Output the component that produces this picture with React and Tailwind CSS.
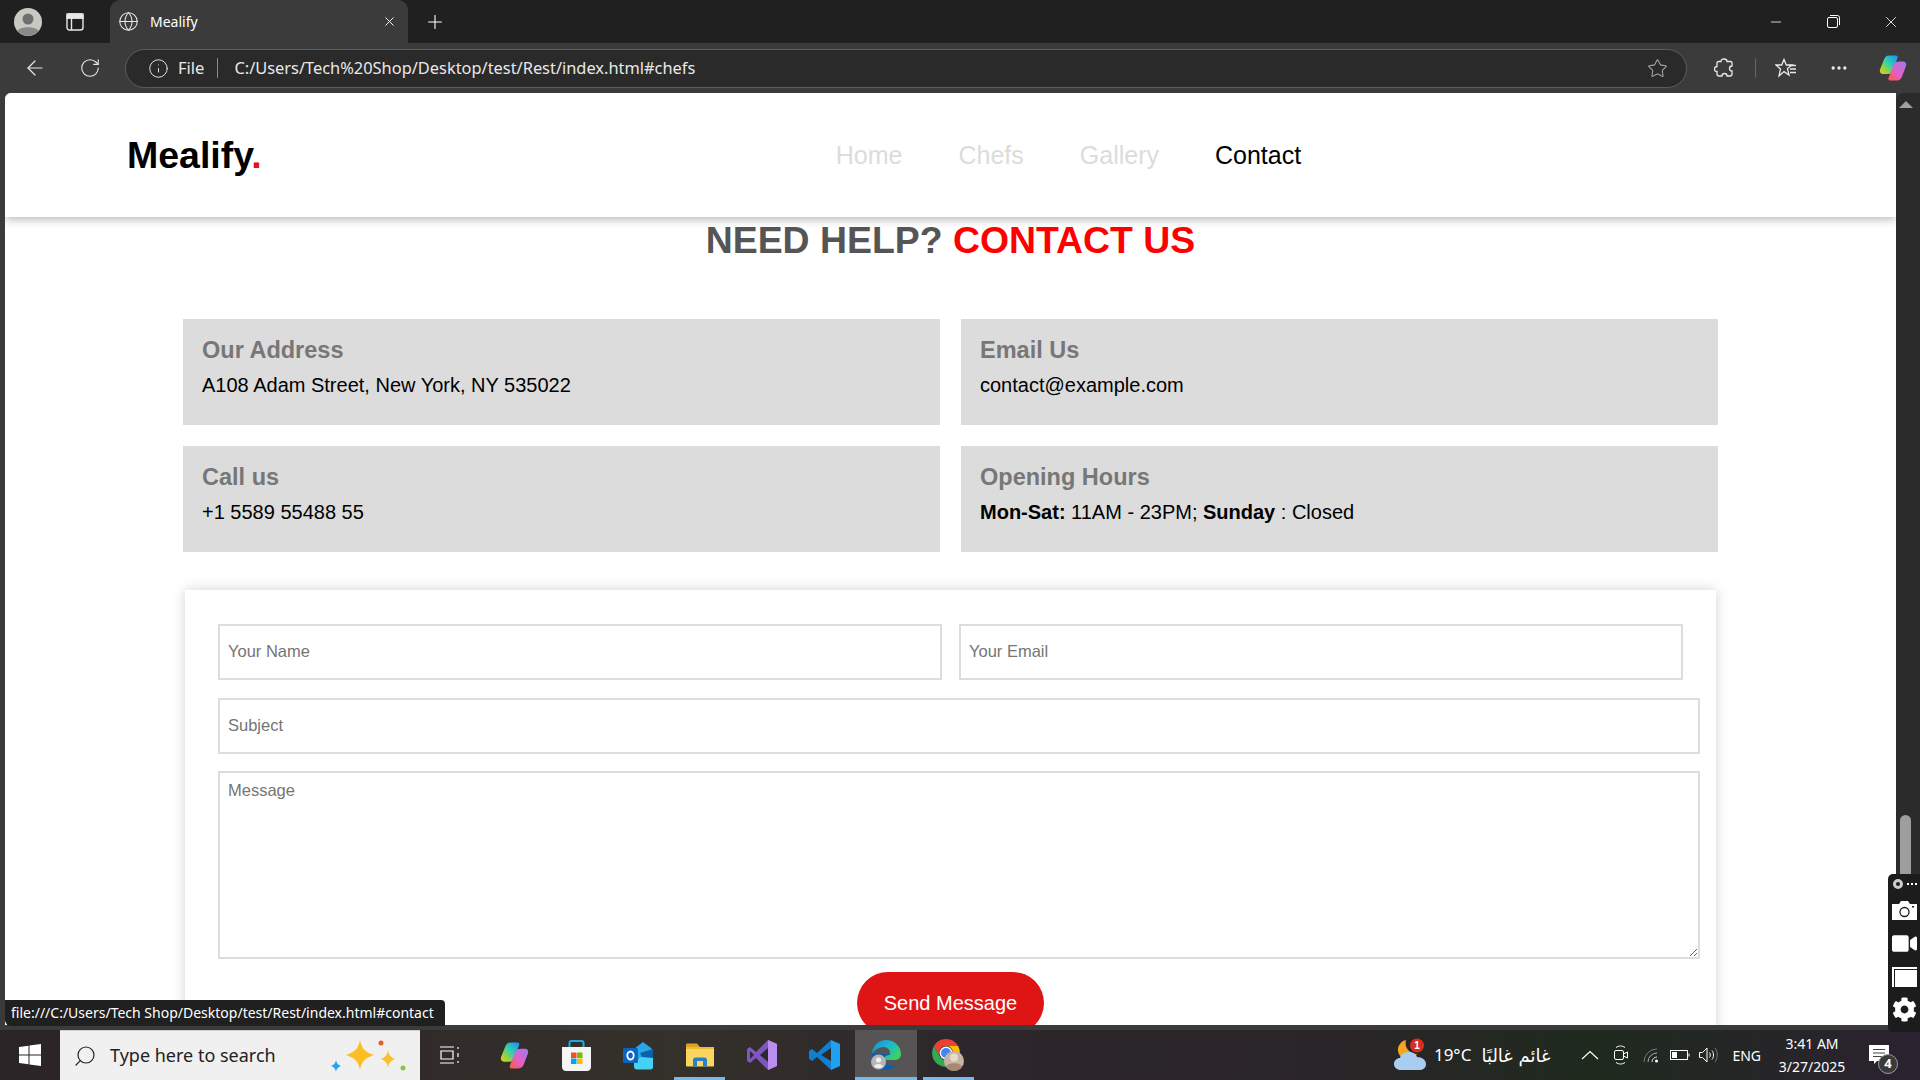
import React from 'react';
import { ArrowLeft, RotateCw, Info, Star, MoreHorizontal, Globe, X, Plus, Minus, Search } from 'lucide-react';
import { FaCog, FaVideo } from 'react-icons/fa';

const CopilotLogo = ({ id, size = 28 }) => (
  <svg width={size} height={size} viewBox="0 0 28 28">
    <defs>
      <linearGradient id={`${id}A`} x1="1" y1="0" x2="0" y2="1">
        <stop offset="0" stopColor="#1a8cff" />
        <stop offset="0.45" stopColor="#2fd0b0" />
        <stop offset="0.75" stopColor="#9ad23c" />
        <stop offset="1" stopColor="#f7c81e" />
      </linearGradient>
      <linearGradient id={`${id}B`} x1="1" y1="0" x2="0" y2="1">
        <stop offset="0" stopColor="#9b7bf0" />
        <stop offset="0.55" stopColor="#e45fc8" />
        <stop offset="1" stopColor="#ff5a36" />
      </linearGradient>
    </defs>
    <path d="M10 1.500h7c1.500 0 2 1 1.500 2.500L13.500 17c-.8 2-2 3-4 3H4.500C1.500 20 .3 18 1 15.500L5 5.500C6 3 7.500 1.500 10 1.500z" fill={`url(#${id}A)`} />
    <path d="M20 7.500h3.500c3 0 4.300 2 3.500 4.500l-4 10.500c-1 2.500-2.500 4-5 4h-7c-1.500 0-2-1-1.500-2.500L14.500 11c.8-2.300 2.500-3.500 5.500-3.500z" fill={`url(#${id}B)`} />
  </svg>
);

const WindowsLogo = () => (
  <svg width="22" height="22" viewBox="0 0 22 22" fill="#fff">
    <path d="M0 3.100 9.500 1.700V10.500H0zM10.500 1.500 22 0V10.500H10.500zM0 11.500H9.500V20.300L0 18.900zM10.500 11.500H22V22L10.500 20.500z" />
  </svg>
);

const SparkleLogo = () => (
  <svg width="78" height="34" viewBox="0 0 78 34">
    <path d="M30 1c1.500 8 4.500 12 14 15-9.500 3-12.500 7-14 15-1.500-8-4.500-12-14-15 9.500-3 12.500-7 14-15z" fill="#fbbf24" />
    <path d="M58 11c.8 5 2.400 7 7 9-4.600 2-6.200 4-7 9-.8-5-2.400-7-7-9 4.600-2 6.200-4 7-9z" fill="#f8c12c" />
    <path d="M6 21c.5 3 1.500 4.500 5 6-3.500 1.500-4.500 3-5 6-.5-3-1.500-4.500-5-6 3.500-1.500 4.500-3 5-6z" fill="#1ea7f2" />
    <circle cx="51" cy="4" r="2.500" fill="#ea5a2a" />
    <circle cx="73" cy="29" r="2.500" fill="#8bc34a" />
  </svg>
);

const TaskView = () => (
  <svg width="20" height="20" viewBox="0 0 20 20" fill="none" stroke="#fff" strokeWidth="1.200">
    <path d="M0 2h14M0 18h14M1 6h12v8H1zM18 2v2M18 8v4M18 16v2" />
  </svg>
);

const StoreLogo = () => (
  <svg width="29" height="31" viewBox="0 0 29 31">
    <path d="M7.500 8V3c0-1 .5-2 2-2h10c1.500 0 2 1 2 2v5" fill="none" stroke="#1ea7e0" strokeWidth="2" />
    <path d="M0 7h29v20c0 2-1.500 4-4 4H4c-2.500 0-4-2-4-4z" fill="#f5f5f5" />
    <rect x="9" y="12.500" width="5.500" height="5.500" fill="#f25022" />
    <rect x="15" y="12.500" width="5.500" height="5.500" fill="#7fba00" />
    <rect x="9" y="18.500" width="5.500" height="5.500" fill="#00a4ef" />
    <rect x="15" y="18.500" width="5.500" height="5.500" fill="#ffb900" />
  </svg>
);

const OutlookLogo = () => (
  <svg width="30" height="29" viewBox="0 0 30 29">
    <path d="M11 8 20 1l8 6 2 3v7H11z" fill="#28a8ea" />
    <path d="M17 12 30 8v9l-9 3z" fill="#0f5fa8" />
    <path d="M11 19l8-3 11 1v9c0 1.500-1 2.500-2.500 2.500H14c-2 0-3-1-3-3z" fill="#45d0f5" />
    <rect x="0" y="7" width="15" height="15" rx="1.500" fill="#0a64c0" />
    <ellipse cx="7.500" cy="14.500" rx="3.200" ry="4" fill="none" stroke="#fff" strokeWidth="1.800" />
  </svg>
);

const FolderLogo = () => (
  <svg width="28" height="24" viewBox="0 0 28 24">
    <path d="M0 2c0-1 .5-1.500 1.500-1.500H11L14 4H0z" fill="#e0a020" />
    <rect x="0" y="4" width="28" height="19.500" rx="1" fill="#fbd65f" />
    <path d="M0 4h28v2H0z" fill="#f0b93a" />
    <path d="M7 23.500V17c0-1.500 1-2.500 2.500-2.500h9c1.500 0 2.500 1 2.500 2.500v6.500h-4V18h-6v5.500z" fill="#2a7fc9" />
  </svg>
);

const VisualStudioLogo = () => (
  <svg width="30" height="30" viewBox="0 0 30 30">
    <path d="M21 0 9 12 3 7 0 9v12l3 2 6-5 12 12 9-4V4z" fill="#7d57bd" />
    <path d="M21 0l9 4v22l-9 4z" fill="#b98ef0" />
    <path d="M21 8v14l-8-7z" fill="#2d2830" />
    <path d="M3 11v8l4-4z" fill="#2d2830" />
  </svg>
);

const VSCodeLogo = () => (
  <svg width="31" height="30" viewBox="0 0 31 30">
    <path d="M22 0 8 13 3 9l-3 2v8l3 2 5-4 14 13v-9l-10-6 10-7z" fill="#0f7fd0" />
    <path d="M22 0l9 4v22l-9 4z" fill="#1ea1f1" />
  </svg>
);

const EdgeLogo = () => (
  <svg width="30" height="30" viewBox="0 0 30 30">
    <defs>
      <linearGradient id="edgeTop" x1="0" y1="0" x2="1" y2="0.600">
        <stop offset="0" stopColor="#1590e0" />
        <stop offset="0.6" stopColor="#1fb8c8" />
        <stop offset="1" stopColor="#40d060" />
      </linearGradient>
    </defs>
    <path d="M1 14C2 5 8 0 15 0c9 0 15 7 15 14 0 4-3 6-7 6H12c0-3 3-5 7-5 1-4-2-8-6-8-5 0-10 3-12 7z" fill="url(#edgeTop)" />
    <path d="M1 14c-1 9 6 16 14 16 4 0 8-2 11-5-6 1-13-1-14-5 0-3 3-5 7-5-6-2-15-2-18-1z" fill="#0e5fa8" />
    <circle cx="7.500" cy="22" r="7.500" fill="#b5b5b5" />
    <circle cx="7.500" cy="20" r="2.600" fill="#f0f0f0" />
    <path d="M3 26.500c.6-3.500 8.400-3.500 9 0a7 7 0 0 1-9 0z" fill="#f0f0f0" />
  </svg>
);

const ChromeLogo = () => (
  <svg width="32" height="32" viewBox="0 0 32 32">
    <path d="M14 0A14 14 0 0 1 26.100 7H14A7 7 0 0 0 7.900 17.500L1.900 7A14 14 0 0 1 14 0z" fill="#ea4335" />
    <path d="M26.100 7A14 14 0 0 1 14 28l6.100-10.500A7 7 0 0 0 14 7z" fill="#fbbc05" />
    <path d="M14 28A14 14 0 0 1 1.900 7l6 10.500a7 7 0 0 0 12.200 0z" fill="#34a853" />
    <circle cx="14" cy="14" r="6.500" fill="#fff" />
    <circle cx="14" cy="14" r="5" fill="#4285f4" />
    <circle cx="22" cy="22" r="10" fill="#c9b4a4" />
    <circle cx="22" cy="18.500" r="4" fill="#e9dbcc" />
    <path d="M14 28c1-5 15-5 16 0a10 10 0 0 1-16 0z" fill="#a98870" />
  </svg>
);

const WeatherLogo = () => (
  <svg width="34" height="34" viewBox="0 0 34 34">
    <path d="M13 2a10 10 0 1 0 11 14A11 11 0 0 1 13 2z" fill="#f5a524" />
    <path d="M8 32c-4 0-7-2.500-7-6s3-6 6-6c1-4 5-6 9-6 4 0 7 2 8 5 5 0 9 3 9 7s-3 6-7 6z" fill="#a9cdf0" />
    <circle cx="24" cy="7.500" r="7" fill="#d92d20" />
    <text x="24" y="11" fontSize="10" fontWeight="700" fill="#fff" textAnchor="middle" fontFamily="Liberation Sans, sans-serif">1</text>
  </svg>
);

const TrayChevron = () => (
  <svg width="24" height="24" viewBox="0 0 24 24" fill="none" stroke="#fff" strokeWidth="1.200">
    <path d="M4 16l8-7.500 8 7.500" />
  </svg>
);

const TrayCamera = () => (
  <svg width="16" height="20" viewBox="0 0 16 20" fill="none" stroke="#fff" strokeWidth="1">
    <rect x="1.500" y="5.500" width="9" height="9" rx="1.500" />
    <path d="M10.500 9l4-2v6l-4-2M3 2.500c3-2 6-2 9 0M3 17.500c3 2 6 2 9 0" />
  </svg>
);

const TrayWifi = () => (
  <svg width="16" height="16" viewBox="0 0 16 16" fill="none" strokeWidth="1">
    <path d="M1 15A13 13 0 0 1 14 2" stroke="#777" />
    <path d="M5 15a9 9 0 0 1 9-9" stroke="#aaa" />
    <path d="M9 15a5 5 0 0 1 5-5" stroke="#ddd" />
    <circle cx="13.500" cy="14" r="1.500" fill="#fff" />
  </svg>
);

const TrayBattery = () => (
  <svg width="20" height="12" viewBox="0 0 20 12" fill="none" stroke="#fff" strokeWidth="1">
    <rect x="0.500" y="1.500" width="17" height="9" />
    <rect x="2" y="3" width="5" height="6" fill="#fff" stroke="none" />
    <path d="M19 4.500v3" />
  </svg>
);

const TraySpeaker = () => (
  <svg width="20" height="16" viewBox="0 0 20 16" fill="none" strokeWidth="1">
    <path d="M.5 5.500h3L8 1v14l-4.500-4.500h-3z" stroke="#fff" />
    <path d="M10.500 5.500c1 1.500 1 3.500 0 5" stroke="#fff" />
    <path d="M13 3.500c2 2.500 2 6.500 0 9" stroke="#fff" />
    <path d="M16 1c3 4 3 10 0 14" stroke="#777" />
  </svg>
);

const PuzzleOutline = () => (
  <svg width="20" height="20" viewBox="0 0 20 20" fill="none" stroke="#e8e8e8" strokeWidth="1.300">
    <path d="M7 3.500C7 1.500 8 1 10 1s3 .5 3 2.500h3.500c1 0 1.500.5 1.500 1.500v3c-2 0-2.500 1-2.500 2.500s.5 2.500 2.500 2.500v3c0 1-.5 2-2 2h-3c0-2-1-2.500-2.500-2.500S8 16 8 18H5c-1.500 0-2-1-2-2v-2.500C1 13.500 .5 12.500 .5 11S1 8.500 3 8.500V5c0-1 .5-1.500 1.500-1.500z" />
  </svg>
);

const FavoritesIcon = () => (
  <svg width="22" height="20" viewBox="0 0 22 20" fill="none" stroke="#e8e8e8" strokeWidth="1.300">
    <path d="M9 1.500 11.300 7H17l-4.500 3.600L14 17l-5-3.400L4 18l1.500-7L1 7h5.700z" />
    <path d="M14 7.500h7M15 11h6M15 14.500h6" />
  </svg>
);

const SidebarIcon = () => (
  <svg width="18" height="18" viewBox="0 0 18 18" fill="none" stroke="#e8e8e8" strokeWidth="1.400">
    <rect x="1" y="1" width="16" height="16" rx="2.500" />
    <path d="M5.500 5v12M1 5h16" />
    <rect x="1" y="1" width="16" height="4" fill="#e8e8e8" />
  </svg>
);

const Avatar = () => (
  <svg width="28" height="28" viewBox="0 0 28 28">
    <circle cx="14" cy="14" r="14" fill="#c9c9c4" />
    <circle cx="14" cy="11" r="5.500" fill="#6f6f6f" />
    <path d="M3.500 23c2-5 19-5 21 0a14 14 0 0 1-21 0z" fill="#8a8a8a" />
  </svg>
);

const RestoreIcon = () => (
  <svg width="13" height="13" viewBox="0 0 13 13" fill="none" stroke="#fff" strokeWidth="1">
    <rect x="0.500" y="2.500" width="10" height="10" rx="1.500" />
    <path d="M3 .5h7.500a2 2 0 0 1 2 2V10" />
  </svg>
);

const NotificationIcon = () => (
  <div className="relative w-[20px] h-[20px]">
    <svg width="20" height="20" viewBox="0 0 20 20">
      <path d="M0 0h20v16H8l-3 3v-3H0z" fill="#fff" />
      <path d="M4 4.500h12M4 8h12M4 11.500h9" stroke="#444" strokeWidth="1" />
    </svg>
    <span className="absolute left-[9px] top-[9px] w-[20px] h-[20px] rounded-full border border-[#999] bg-[#3a3a3a] text-white text-[13px] font-bold flex items-center justify-center font-['Noto_Sans',sans-serif]">4</span>
  </div>
);

const WidgetCamera = () => (
  <svg width="25" height="19" viewBox="0 0 25 19">
    <path d="M0 3h7l2-3h7l2 3h7v16H0z" fill="#fff" />
    <circle cx="12.500" cy="11" r="4.500" fill="none" stroke="#1c1c1c" strokeWidth="1.300" />
    <rect x="20" y="5" width="2" height="1.500" fill="#1c1c1c" />
  </svg>
);

const ContactCard = ({ title, children }) => (
  <div className="bg-[#dcdcdc] h-[106px] pl-[19px] pt-[16px]">
    <h3 className="text-[23.500px] leading-[30px] font-bold text-[#777]">{title}</h3>
    <p className="text-[20px] leading-[26px] mt-[7px] text-black">{children}</p>
  </div>
);

const fieldClass = 'border-2 border-[#ddd] bg-white px-2 text-[16.500px] outline-none placeholder:text-[#757575]';

const TaskSlot = ({ children, active, underline }) => (
  <div className={`relative w-[62px] h-full flex items-center justify-center ${active ? 'bg-[#575456]' : ''}`}>
    {children}
    {underline && <span className={`absolute bottom-0 h-[3px] bg-[#76b9ed] ${underline}`} />}
  </div>
);

const WidgetButton = ({ children }) => (
  <div className="h-[33px] flex items-center justify-center">{children}</div>
);

export default function App() {
  return (
    <div className="relative w-[1920px] h-[1080px] overflow-hidden flex flex-col bg-[#3b3b3b] font-['Liberation_Sans',sans-serif]">
      {/* title bar */}
      <div className="h-[43px] bg-[#202020] flex items-center text-white font-['Noto_Sans',sans-serif] shrink-0">
        <div className="w-[56px] pl-[14px]"><Avatar /></div>
        <div className="w-[54px] flex justify-center pr-[16px]"><SidebarIcon /></div>
        <div className="w-[298px] h-full bg-[#3b3b3b] rounded-t-[10px] flex items-center pl-[8px] pr-[11px]">
          <Globe size={21} strokeWidth={1.200} className="text-[#e8e8e8]" />
          <span className="ml-[11px] text-[14px]">Mealify</span>
          <X size={15} strokeWidth={1.500} className="ml-auto" />
        </div>
        <Plus size={22} strokeWidth={1.200} className="ml-[16px]" />
        <div className="ml-auto flex items-center">
          <Minus size={16} strokeWidth={1.200} className="mr-[43px]" />
          <RestoreIcon />
          <X size={18} strokeWidth={1.100} className="ml-[42px] mr-[20px]" />
        </div>
      </div>

      {/* toolbar */}
      <div className="h-[50px] bg-[#3b3b3b] flex items-center text-[#e8e8e8] font-['Noto_Sans',sans-serif] shrink-0">
        <ArrowLeft size={24} strokeWidth={1.200} className="ml-[23px]" />
        <RotateCw size={22} strokeWidth={1.200} className="ml-[32px]" />
        <div className="ml-[24px] w-[1562px] h-[39px] rounded-full bg-[#2a2a2a] border border-[#5c5c5c] flex items-center pl-[22px] pr-[18px]">
          <Info size={21} strokeWidth={1.100} />
          <span className="ml-[9px] text-[16.500px] leading-none">File</span>
          <span className="ml-[13px] w-px h-[20px] bg-[#8a8a8a]" />
          <span className="ml-[16px] text-[16.400px] leading-none">C:/Users/Tech%20Shop/Desktop/test/Rest/index.html#chefs</span>
          <Star size={21} strokeWidth={1.200} className="ml-auto text-[#a8a8a8]" />
        </div>
        <div className="ml-[27px]"><PuzzleOutline /></div>
        <span className="ml-[21px] w-px h-[20px] bg-[#666]" />
        <div className="ml-[19px]"><FavoritesIcon /></div>
        <MoreHorizontal size={20} className="ml-[32px]" />
        <div className="ml-[30px]"><CopilotLogo id="cpTool" /></div>
      </div>

      {/* page + scrollbar */}
      <div className="flex-1 min-h-0 flex pl-[5px]">
        <div className="flex-1 min-w-0 bg-white rounded-tl-[6px] overflow-hidden">
          <header className="relative z-10 h-[124px] bg-white shadow-[0_2px_9px_rgba(0,0,0,0.3)] flex items-center pl-[122px]">
            <span className="text-[37.500px] font-bold text-black">Mealify<span className="text-[#e01515]">.</span></span>
            <nav className="ml-[574px] pt-[2px] flex gap-[56px] text-[25px] text-[#dcdcdc]">
              <a>Home</a>
              <a>Chefs</a>
              <a>Gallery</a>
              <a className="text-black">Contact</a>
            </nav>
          </header>

          <h2 className="text-center text-[37.400px] leading-[44px] font-bold text-[#555] mt-[1px]">
            NEED HELP? <span className="text-[#ff0000]">CONTACT US</span>
          </h2>

          <div className="w-[1535px] mx-auto mt-[57px] grid grid-cols-2 gap-[21px]">
            <ContactCard title="Our Address">A108 Adam Street, New York, NY 535022</ContactCard>
            <ContactCard title="Email Us">contact@example.com</ContactCard>
            <ContactCard title="Call us">+1 5589 55488 55</ContactCard>
            <ContactCard title="Opening Hours">
              <b>Mon-Sat:</b> 11AM - 23PM; <b>Sunday</b> : Closed
            </ContactCard>
          </div>

          <form className="w-[1531px] mx-auto mt-[38px] pt-[34px] pl-[33px] pr-[16px] h-[480px] shadow-[0_0_12px_rgba(0,0,0,0.18)]">
            <div className="flex gap-[17px] pr-[17px]">
              <input className={`${fieldClass} flex-1 min-w-0 h-[56px] pb-[2px]`} placeholder="Your Name" />
              <input className={`${fieldClass} flex-1 min-w-0 h-[56px] pb-[2px]`} placeholder="Your Email" />
            </div>
            <input className={`${fieldClass} block w-full h-[56px] mt-[18px] pb-[2px]`} placeholder="Subject" />
            <textarea className={`${fieldClass} block w-full h-[188px] mt-[17px] py-[5px]`} placeholder="Message" />
            <div className="flex justify-center mt-[13px] pr-[17px]">
              <button type="button" className="w-[187px] h-[62px] rounded-full bg-[#df1515] text-white text-[20px]">Send Message</button>
            </div>
          </form>
        </div>

        {/* scrollbar */}
        <div className="relative w-[24px] pr-[5px] bg-[#2b2b2b] rounded-tl-[8px] flex flex-col items-center">
          <span className="mt-[8px] w-0 h-0 border-x-[7px] border-x-transparent border-b-[7px] border-b-[#a0a0a0]" />
          <span className="mt-[707px] w-[11px] h-[80px] rounded-full bg-[#9e9e9e]" />
        </div>
      </div>

      <div className="h-[5px] bg-[#3b3b3b] shrink-0" />

      {/* taskbar */}
      <div className="h-[50px] bg-[linear-gradient(90deg,#2b2427,#34302a_35%,#2d272c_50%,#2a2528_70%,#1f2a1e_83%,#2b2230)] flex items-center text-white font-['Noto_Sans',sans-serif] shrink-0">
        <div className="w-[60px] flex justify-center"><WindowsLogo /></div>
        <div className="w-[360px] h-full bg-[#f0f0f0] border-t border-[#ccc] flex items-center pl-[13px] text-[#222]">
          <Search size={24} strokeWidth={1.200} className="-scale-x-100" />
          <span className="ml-[13px] text-[18px]">Type here to search</span>
          <div className="ml-auto mr-[12px]"><SparkleLogo /></div>
        </div>
        <div className="w-[60px] flex justify-center"><TaskView /></div>
        <div className="ml-[3px] flex h-full">
          <TaskSlot><CopilotLogo id="cpTask" size={29} /></TaskSlot>
          <TaskSlot><StoreLogo /></TaskSlot>
          <TaskSlot><OutlookLogo /></TaskSlot>
          <TaskSlot underline="left-[5px] w-[51px]"><FolderLogo /></TaskSlot>
          <TaskSlot><VisualStudioLogo /></TaskSlot>
          <TaskSlot><VSCodeLogo /></TaskSlot>
          <TaskSlot active underline="left-0 w-full"><EdgeLogo /></TaskSlot>
          <TaskSlot underline="left-[6px] w-[51px]"><ChromeLogo /></TaskSlot>
        </div>

        <div className="ml-auto flex items-center">
          <WeatherLogo />
          <span className="ml-[7px] text-[17px]">19°C</span>
          <span className="ml-[9px] w-[70px] text-[18px] whitespace-nowrap font-['DejaVu_Sans',sans-serif]" dir="rtl">غائم غالبًا</span>
          <div className="ml-[28px]"><TrayChevron /></div>
          <div className="ml-[11px]"><TrayCamera /></div>
          <div className="ml-[14px]"><TrayWifi /></div>
          <div className="ml-[11px]"><TrayBattery /></div>
          <div className="ml-[9px]"><TraySpeaker /></div>
          <span className="ml-[13px] text-[14px]">ENG</span>
          <div className="ml-[1px] w-[100px] text-center text-[14px] leading-[23px]">
            <div>3:41 AM</div>
            <div>3/27/2025</div>
          </div>
          <div className="ml-[7px] mr-[31px]"><NotificationIcon /></div>
        </div>
      </div>

      {/* link status bubble */}
      <div className="absolute left-[5px] top-[1000px] w-[440px] h-[26px] bg-[#202020] rounded-tr-[4px] rounded-bl-[6px] pl-[6px] text-[14px] leading-[26px] text-white font-['Noto_Sans',sans-serif] whitespace-nowrap">
        file:///C:/Users/Tech Shop/Desktop/test/Rest/index.html#contact
      </div>

      {/* screen recorder widget */}
      <div className="absolute left-[1888px] top-[874px] w-[32px] h-[158px] bg-[#1c1c1c] rounded-l-[5px] text-white">
        <div className="h-[20px] flex items-center pl-[5px]">
          <span className="w-[10px] h-[10px] rounded-full border-[3px] border-[#ccc]" />
          <span className="ml-[4px] flex gap-[2px]">
            <i className="w-[2px] h-[2px] bg-white" />
            <i className="w-[2px] h-[2px] bg-white" />
            <i className="w-[2px] h-[2px] bg-white" />
          </span>
        </div>
        <WidgetButton><WidgetCamera /></WidgetButton>
        <WidgetButton><FaVideo size={25} color="#fff" /></WidgetButton>
        <WidgetButton>
          <div className="relative w-[25px] h-[20px] border-l-2 border-t-2 border-white">
            <span className="absolute left-[1px] top-[1px] w-[22px] h-[17px] bg-white" />
          </div>
        </WidgetButton>
        <WidgetButton><FaCog size={25} color="#fff" /></WidgetButton>
      </div>
    </div>
  );
}
